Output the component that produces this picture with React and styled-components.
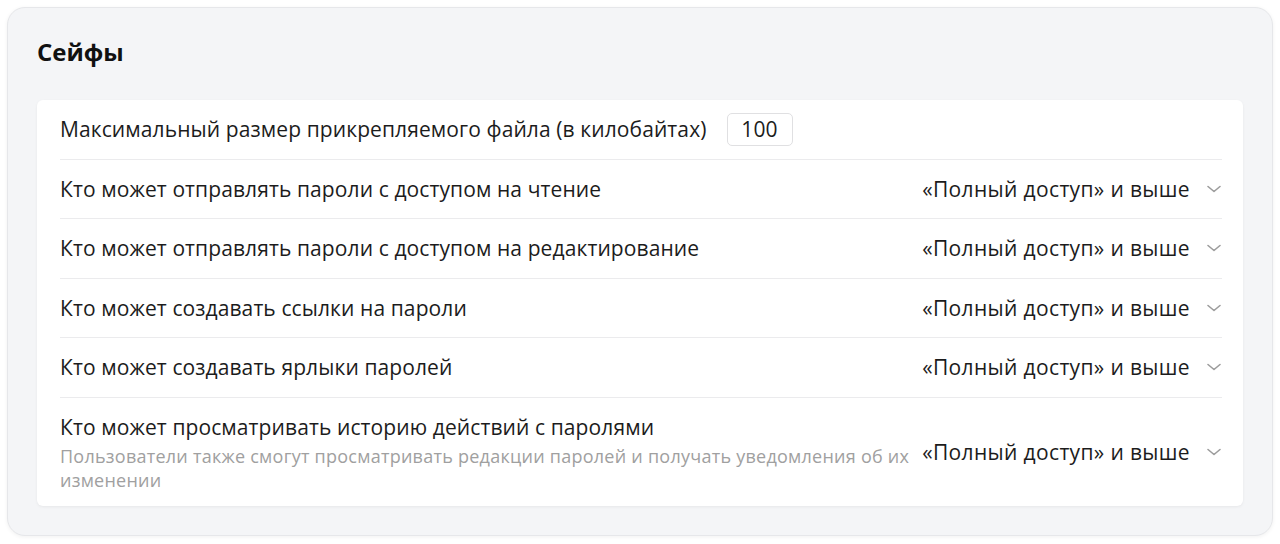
import React from "react";
import styled, { createGlobalStyle } from "styled-components";

const GlobalStyle = createGlobalStyle`
  body {
    margin: 0;
    background: #ffffff;
    font-family: "Open Sans", "Noto Sans", sans-serif;
    color: #1c1c1c;
  }
`;

const Page = styled.div`
  padding: 7px;
`;

const Section = styled.section`
  background: #f4f5f7;
  border: 1px solid #e6e7ea;
  border-radius: 18px;
  box-shadow: 0 1px 4px rgba(0, 0, 0, 0.06);
  padding: 29px;
`;

const Title = styled.h2`
  margin: 0 0 33px;
  font-size: 24px;
  line-height: 30px;
  font-weight: 700;
  color: #111;
`;

const Card = styled.div`
  background: #fff;
  border-radius: 6px;
  box-shadow: 0 1px 3px rgba(0, 0, 0, 0.06);
  padding: 0 21px 0 23px;
`;

const Row = styled.div`
  display: flex;
  align-items: center;
  justify-content: space-between;
  gap: 6px;
  padding: 14px 0;
  border-top: ${(p) => (p.$first ? "none" : "1px solid #ebebed")};
`;

const Label = styled.div`
  display: flex;
  flex-direction: column;
`;

const LabelLine = styled.div`
  display: flex;
  align-items: center;
  gap: 20px;
  font-size: 21px;
  letter-spacing: 0.1px;
  line-height: 30.5px;
`;

const Hint = styled.div`
  margin-top: 2px;
  font-size: 18px;
  letter-spacing: 0.25px;
  line-height: 24px;
  color: #a0a0a0;
`;

const NumberBox = styled.div`
  width: 66px;
  height: 33px;
  margin: -2.5px 0;
  box-sizing: border-box;
  border: 1px solid #e0e0e2;
  border-radius: 5px;
  display: flex;
  align-items: center;
  justify-content: center;
  font-size: 21px;
`;

const Select = styled.div`
  display: flex;
  align-items: center;
  gap: 16px;
  flex-shrink: 0;
  font-size: 21px;
  letter-spacing: 0.35px;
  line-height: 30.5px;
  white-space: nowrap;
`;

const Chevron = () => (
  <svg width="16" height="16" viewBox="0 0 16 16" fill="none">
    <path d="M2 5.5l6 5 6-5" stroke="#9c9c9c" strokeWidth="1.6" strokeLinecap="round" strokeLinejoin="round" />
  </svg>
);

const rows = [
  { label: "Кто может отправлять пароли с доступом на чтение" },
  { label: "Кто может отправлять пароли с доступом на редактирование" },
  { label: "Кто может создавать ссылки на пароли" },
  { label: "Кто может создавать ярлыки паролей" },
  {
    label: "Кто может просматривать историю действий с паролями",
    hint: "Пользователи также смогут просматривать редакции паролей и получать уведомления об их изменении",
  },
];

export default function App() {
  return (
    <Page>
      <GlobalStyle />
      <Section>
        <Title>Сейфы</Title>
        <Card>
          <Row $first>
            <LabelLine>
              Максимальный размер прикрепляемого файла (в килобайтах)
              <NumberBox>100</NumberBox>
            </LabelLine>
          </Row>
          {rows.map((r) => (
            <Row key={r.label}>
              <Label>
                <LabelLine>{r.label}</LabelLine>
                {r.hint && <Hint>{r.hint}</Hint>}
              </Label>
              <Select>
                «Полный доступ» и выше
                <Chevron />
              </Select>
            </Row>
          ))}
        </Card>
      </Section>
    </Page>
  );
}
